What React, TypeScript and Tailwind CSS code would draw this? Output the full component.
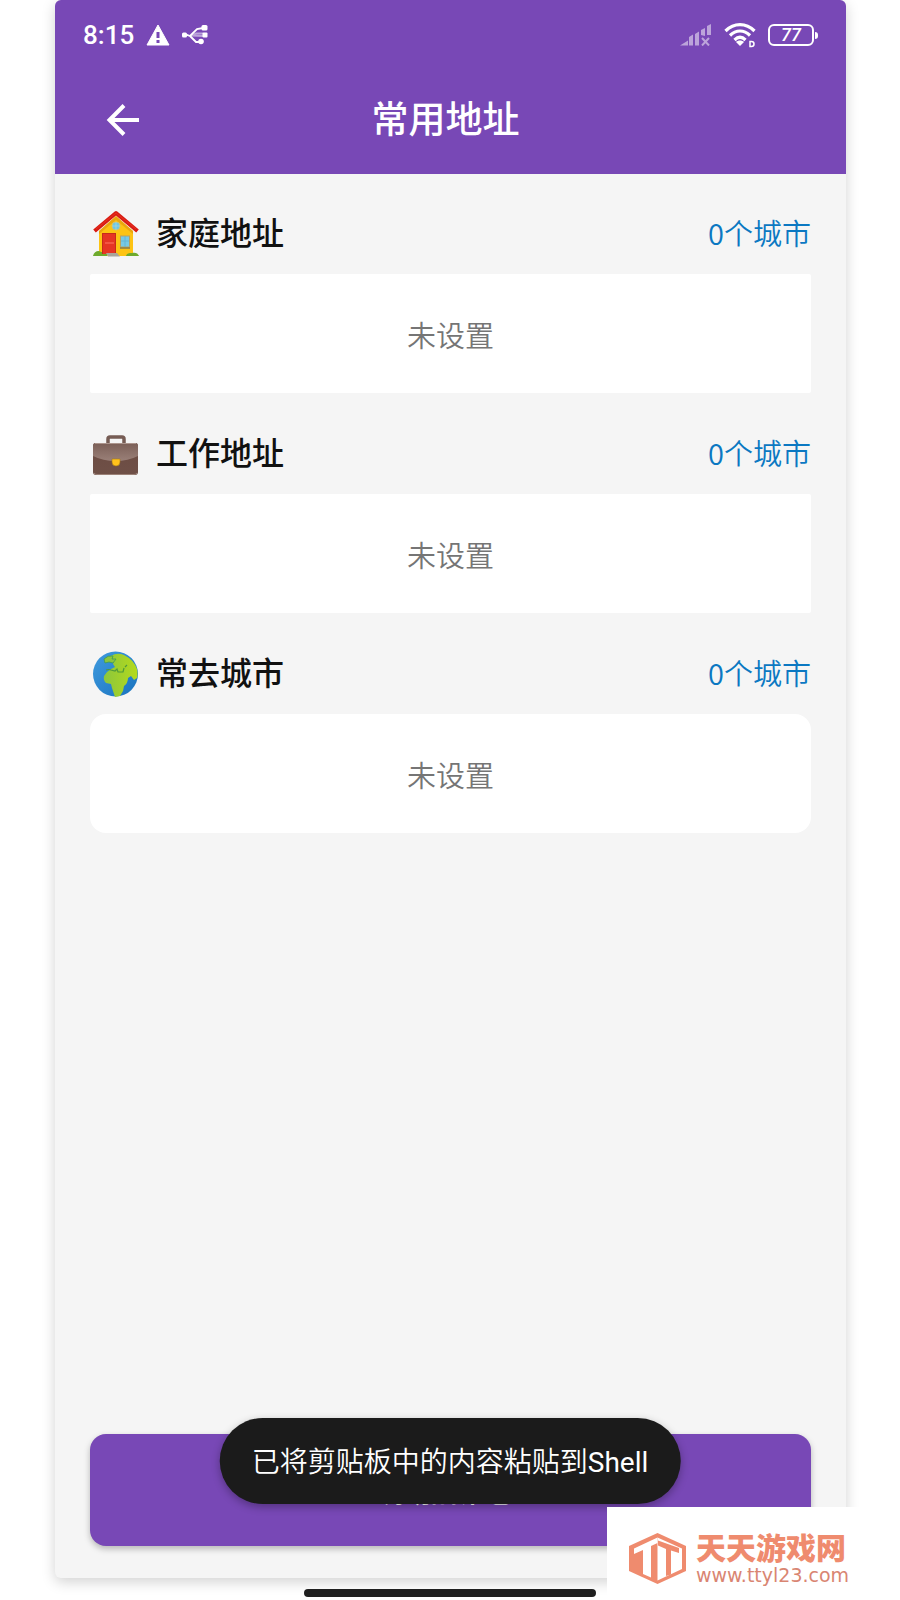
import type { ReactNode } from 'react';

interface AddressSectionProps {
  icon: ReactNode;
  title: string;
  count: number;
  rounded?: boolean;
}

function WarningIcon() {
  return (
    <svg viewBox="0 0 24 22" className="h-[22px] w-6" aria-hidden="true">
      <path d="M12 1 23 21H1Z" fill="currentColor" stroke="currentColor" strokeLinejoin="round" />
      <path d="M12 8v6M12 16v3" stroke="#7747b5" strokeWidth="3" />
    </svg>
  );
}

function UsbIcon() {
  return (
    <svg viewBox="0 0 26 20" className="h-5 w-[26px]" fill="none" stroke="currentColor" strokeWidth="1.8" aria-hidden="true">
      <path d="M3 10h2l3 1 7-7 6-1" />
      <path d="M9 10.500 14 8.500h7M9 10.500l12 .5" strokeOpacity=".5" />
      <path d="m8 11 6 6h5" />
      <rect x="0" y="7.500" width="5" height="5" rx="1.500" fill="currentColor" stroke="none" />
      <rect x="19.500" y="0" width="6" height="5.500" rx="1.500" fill="currentColor" stroke="none" />
      <rect x="20.500" y="7.500" width="5" height="5" rx="1" fill="currentColor" stroke="none" />
      <circle cx="19" cy="16.500" r="2.800" fill="currentColor" stroke="none" />
    </svg>
  );
}

function SignalIcon() {
  return (
    <svg viewBox="0 0 32 22" className="h-[22px] w-8 opacity-50" fill="currentColor" aria-hidden="true">
      <path d="M0 21.500 8 16.500v5ZM9 13l4-2.500v11H9ZM15 10l4-2.500v14h-4ZM21 6l4-2v8l-4-1ZM27 2l4-2v11h-4Z" />
      <path d="m22 14 7 7.500M29 14l-7 7.500" stroke="currentColor" strokeWidth="2" />
    </svg>
  );
}

function WifiIcon() {
  return (
    <svg viewBox="0 0 32 26" className="h-[26px] w-8" fill="none" stroke="currentColor" strokeWidth="3.2" aria-hidden="true">
      <path d="M1.500 9C10 .500 22 .500 30.500 9" />
      <path d="M6 13.500C12 7.500 20 7.500 26 13.500" />
      <path d="M10.500 18c3.500-3.500 7.500-3.500 11 0" />
      <path d="M12 20c2-2 6-2 8 0l-4 4Z" fill="currentColor" stroke="none" />
      <path d="M26 19.500h1.500q2.500 0 2.500 2.500t-2.500 2.500H26Z" strokeWidth="1.500" />
    </svg>
  );
}

function BackIcon() {
  return (
    <svg viewBox="0 0 34 34" className="size-[34px]" fill="none" stroke="currentColor" strokeWidth="4" aria-hidden="true">
      <path d="M33 17H4M18 2.500 3.500 17 18 31.500" />
    </svg>
  );
}

function HouseIcon() {
  return (
    <svg viewBox="0 0 48 48" className="size-12 shrink-0" aria-hidden="true">
      <path d="M24 6 7 21v25h34V21Z" fill="#fdc313" />
      <path d="M7 21 24 6l17 15v3L24 10 7 24Z" fill="#d98a0a" opacity=".5" />
      <path d="M1 46c1-5 6-6 8-4h6v4ZM34 46c1-3 3-3 6-3 3-1 6 0 7 3Z" fill="#6eaa2c" />
      <rect x="10" y="23" width="14" height="21" fill="#c52a1c" />
      <rect x="11" y="24" width="12" height="20" fill="#e63424" />
      <path d="M13 33h9" stroke="#ff7763" />
      <path d="M14 43h11l3 3.500H16Z" fill="#a9a49a" />
      <rect x="28.500" y="26" width="9" height="11" fill="#78c9e5" stroke="#b9a261" />
      <path d="M33 26v11M29 31h8" stroke="#5fb2d3" strokeWidth=".8" />
      <path d="M28 38h10" stroke="#8a7a4a" strokeWidth="1.500" />
      <circle cx="24" cy="16" r="4" fill="#6bc7e7" stroke="#c9c17c" />
      <path d="M24 12v8M20 16h8" stroke="#a4d5da" strokeWidth=".8" />
      <path d="M2.500 21 24 3l21.500 18" fill="none" stroke="#d91c13" strokeWidth="4" strokeLinejoin="round" />
      <path d="M4 19 24 3l20 16" fill="none" stroke="#e8311f" strokeWidth="1" />
    </svg>
  );
}

function BriefcaseIcon() {
  return (
    <svg viewBox="0 0 48 48" className="size-12 shrink-0" aria-hidden="true">
      <defs>
        <linearGradient id="leather" x2="0" y2="1">
          <stop stopColor="#7b5f57" />
          <stop offset="1" stopColor="#9a8078" />
        </linearGradient>
        <linearGradient id="leather-front" x2="0" y2="1">
          <stop stopColor="#6b4b42" />
          <stop offset="1" stopColor="#6f5047" />
        </linearGradient>
      </defs>
      <path d="M16 13V9q0-2 2-2h12q2 0 2 2v4" fill="none" stroke="#765c54" strokeWidth="3.500" />
      <rect x="1" y="13" width="45" height="32" rx="3" fill="url(#leather-front)" />
      <path d="M1 26V16q0-3 3-3h39q3 0 3 3v10q-10 5-22.500 5T1 26Z" fill="url(#leather)" />
      <path d="M3 13.500h41" stroke="#ac958d" />
      <path d="M2 43q1 1.500 3 1.500h37q2 0 3-1.500" stroke="#9b8177" fill="none" />
      <path d="M20 29h8v3q0 4-4 4t-4-4Z" fill="#ffc21c" stroke="#a57a17" strokeWidth=".6" />
    </svg>
  );
}

function GlobeIcon() {
  return (
    <svg viewBox="0 0 48 48" className="size-12 shrink-0" aria-hidden="true">
      <defs>
        <linearGradient id="ocean" x2="1" y2="1">
          <stop stopColor="#3f9bdf" />
          <stop offset="1" stopColor="#1972be" />
        </linearGradient>
        <linearGradient id="land" x2="1" y2="0">
          <stop stopColor="#8cc63c" />
          <stop offset="1" stopColor="#b4da1c" />
        </linearGradient>
      </defs>
      <circle cx="23.500" cy="24" r="22.500" fill="url(#ocean)" />
      <path d="M19 6q6-4 13-1 10 5 13 14 1 6 0 9l-3 2-3-4-3 2q0 5-4 8l-1 5-3 5-5 1-3-9-1-4-5-1q-3-3-2-7l3-4 4-3 4-2-2-3 1-3Z" fill="url(#land)" />
      <path d="M12 9q4-4 9-3l-1 3 4 0-3 4-4-1-4 1Z" fill="#8cc63c" stroke="#3f9b53" strokeWidth=".8" />
      <path d="M14 20q3-1 5 0l4 1 2-2 1 3 5 0 1-4M33 17l2-2" fill="none" stroke="#4f9a3a" strokeWidth="1.200" />
    </svg>
  );
}

function SiteLogo() {
  return (
    <svg viewBox="0 0 57 51" className="h-[51px] w-[57px] shrink-0" aria-hidden="true">
      <path d="M28.500 0 57 13v25L28.500 51 0 38V13Z" fill="#ef8b6e" />
      <path d="M5 15.500 28.500 4.500V10L22 13v31.500l-8-3.500V17l-9 4Z" fill="#fff" />
      <path d="M28.500 4.500 53 15.500V36l-24.500 11.500Z" fill="#fff" />
      <path d="M29 7.500 50 15v5l-8-2.500v24L37 43V16l-8-3.500Z" fill="#ef8b6e" />
    </svg>
  );
}

function StatusBar() {
  return (
    <div className="flex h-[70px] items-center justify-between px-7">
      <div className="flex items-center gap-3">
        <span className="font-['Roboto',sans-serif] text-[26px] font-medium">8:15</span>
        <WarningIcon />
        <UsbIcon />
      </div>
      <div className="flex items-center gap-3">
        <SignalIcon />
        <WifiIcon />
        <div className="flex items-center gap-px">
          <span className="flex h-[22px] w-[46px] items-center justify-center rounded-md border-2 border-white font-['Roboto',sans-serif] text-lg leading-5 font-medium italic">
            77
          </span>
          <span className="h-[7px] w-[3px] rounded-r-sm bg-white" />
        </div>
      </div>
    </div>
  );
}

function AddressSection({ icon, title, count, rounded }: AddressSectionProps) {
  return (
    <section>
      <div className="mb-4 flex h-12 items-center justify-between">
        <div className="flex items-center gap-4 pl-0.5">
          {icon}
          <h2 className="text-[32px] leading-10 font-medium text-[#111]">{title}</h2>
        </div>
        <a href="#" className="pb-1 font-['Noto_Sans_CJK_SC',sans-serif] text-[29px] leading-10 font-[350] text-[#0b78c2]">
          {count}个城市
        </a>
      </div>
      <div className={rounded ? 'rounded-2xl bg-white pt-10 pb-[39px]' : 'rounded-xs bg-white pt-10 pb-[39px]'}>
        <p className="text-center font-['Noto_Sans_CJK_SC',sans-serif] text-[29px] leading-10 font-[350] text-[#757575]">未设置</p>
      </div>
    </section>
  );
}

export default function App() {
  return (
    <div className="relative flex min-h-screen flex-col overflow-hidden bg-white pr-[54px] pb-[22px] pl-[55px] font-['Roboto','Noto_Sans_CJK_SC',sans-serif]">
      <div className="flex flex-1 flex-col rounded-md bg-[#f5f5f5] shadow-[0_4px_14px_rgba(0,0,0,0.18)]">
        <header className="rounded-t-md bg-[#7848b6] pb-1 text-white">
          <StatusBar />
          <div className="grid h-[100px] grid-cols-[1fr_auto_1fr] items-center pr-[61px] pl-[51px]">
            <button type="button" aria-label="返回" className="justify-self-start">
              <BackIcon />
            </button>
            <h1 className="text-[37px] leading-none font-medium">常用地址</h1>
          </div>
        </header>

        <main className="flex flex-1 flex-col px-[35px] pt-9 pb-8">
          <div className="space-y-[37px]">
            <AddressSection icon={<HouseIcon />} title="家庭地址" count={0} />
            <AddressSection icon={<BriefcaseIcon />} title="工作地址" count={0} />
            <AddressSection icon={<GlobeIcon />} title="常去城市" count={0} rounded />
          </div>
          <button
            type="button"
            className="mt-auto h-28 w-full rounded-2xl bg-[#7848b6] pt-0.5 pl-6 text-[32px] font-medium text-white shadow-[0_3px_6px_rgba(0,0,0,0.25)]"
          >
            添加新地址
          </button>
        </main>
      </div>

      <div className="absolute bottom-[3px] left-1/2 h-2 w-[292px] -translate-x-1/2 rounded-full bg-[#1f1f1f]" />

      <div
        role="status"
        className="absolute bottom-24 left-1/2 flex h-[86px] -translate-x-1/2 items-center rounded-full bg-[#1b1b1b] px-8 pt-1 text-[28px] font-[350] whitespace-nowrap text-white shadow-[0_3px_8px_rgba(0,0,0,0.3)]"
      >
        已将剪贴板中的内容粘贴到<span className="font-normal">Shell</span>
      </div>

      <div className="absolute right-0 bottom-0 flex h-[93px] w-[293px] items-center gap-2.5 bg-white pt-2.5 pl-[22px] text-[#ef8b6e]">
        <SiteLogo />
        <div className="pt-1">
          <p className="text-3xl leading-7 font-black">天天游戏网</p>
          <p className="font-['DejaVu_Sans',sans-serif] text-[19px] leading-6 text-[#d98572]">www.ttyl23.com</p>
        </div>
      </div>
    </div>
  );
}
